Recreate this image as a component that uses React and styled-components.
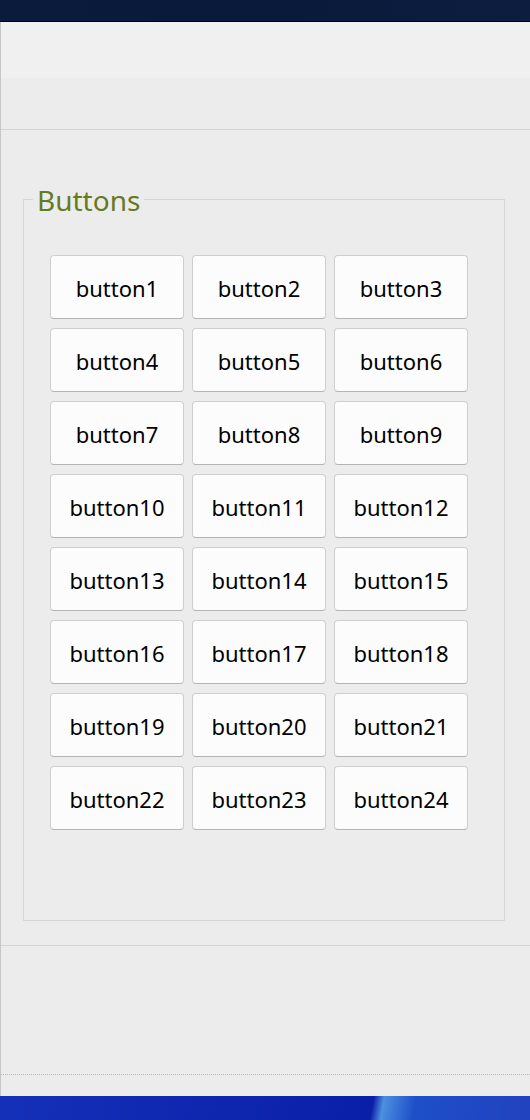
import React from 'react';
import styled, { createGlobalStyle } from 'styled-components';

const GlobalStyle = createGlobalStyle`
  html, body {
    margin: 0;
    padding: 0;
    background: #ececec;
  }
  body {
    font-family: 'Noto Sans', 'Open Sans', sans-serif;
  }
`;

const Screen = styled.div`
  width: 530px;
  height: 1120px;
  display: flex;
  flex-direction: column;
  overflow: hidden;
`;

const TitleBar = styled.div`
  height: 21px;
  flex-shrink: 0;
  background: linear-gradient(90deg, #0b1b3c 0%, #0a1a3a 50%, #0c1d40 100%);
  border-bottom: 1px solid #000000;
`;

const Window = styled.div`
  flex: 1;
  display: flex;
  flex-direction: column;
  border-left: 1px solid #c6c6c6;
  background: #ececec;
`;

const Toolbar = styled.div`
  height: 56px;
  background: #f0f0f0;
`;

const SubBar = styled.div`
  height: 51px;
  background: #ececec;
  border-bottom: 1px solid #d4d4d4;
`;

const Content = styled.div`
  height: 816px;
  box-sizing: border-box;
  padding: 0 25px 0 22px;
  border-bottom: 1px solid #d4d4d4;
`;

const Group = styled.fieldset`
  margin: 51px 0 0 0;
  padding: 38px 0 90px 0;
  border: 1px solid #d6d6d6;
  min-width: 0;
`;

const GroupTitle = styled.legend`
  margin-left: 9px;
  padding: 2px 4px 0;
  font-size: 28px;
  line-height: 34px;
  color: #687a1e;
`;

const ButtonGrid = styled.div`
  display: grid;
  grid-template-columns: repeat(3, 134px);
  grid-auto-rows: 64px;
  column-gap: 8px;
  row-gap: 9px;
  margin-left: 26px;
`;

const GridButton = styled.button`
  font-family: 'Noto Sans', 'Open Sans', sans-serif;
  font-size: 22px;
  color: #000000;
  background: #fcfcfc;
  border: 1px solid #cfcfcf;
  border-bottom-color: #b4b4b4;
  border-radius: 4px;
  padding: 1px 0 0;
  cursor: pointer;

  &:hover {
    background: #f4f4f4;
  }
`;

const Footer = styled.div`
  height: 128px;
  border-bottom: 1px dotted #b8b8b8;
`;

const StatusBar = styled.div`
  flex: 1;
  background: #ececec;
`;

const Taskbar = styled.div`
  height: 24px;
  flex-shrink: 0;
  background: linear-gradient(100deg, #1530b8 0%, #0a1fa8 70%, #4d8fe0 72%, #1d4fc8 78%, #2242c0 100%);
`;

const buttons = Array.from({ length: 24 }, (_, i) => `button${i + 1}`);

export default function App() {
  return (
    <>
      <GlobalStyle />
      <Screen>
        <TitleBar />
        <Window>
          <Toolbar />
          <SubBar />
          <Content>
            <Group>
              <GroupTitle>Buttons</GroupTitle>
              <ButtonGrid>
                {buttons.map((label) => (
                  <GridButton key={label}>{label}</GridButton>
                ))}
              </ButtonGrid>
            </Group>
          </Content>
          <Footer />
          <StatusBar />
        </Window>
        <Taskbar />
      </Screen>
    </>
  );
}
